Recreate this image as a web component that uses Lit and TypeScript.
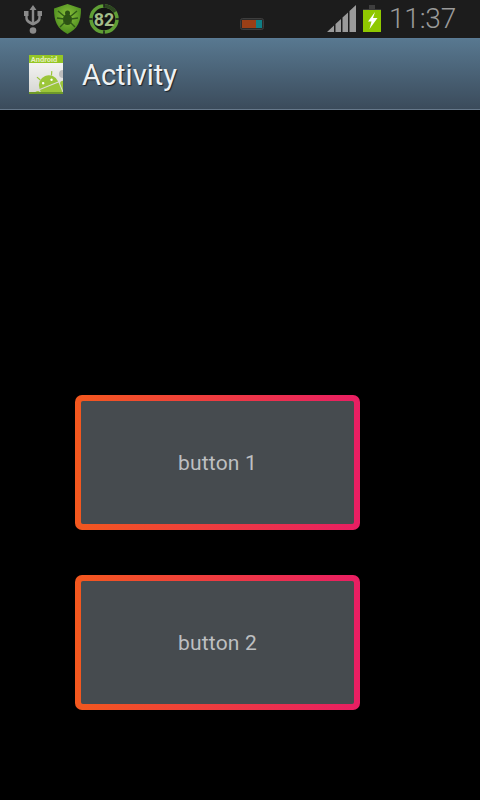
import { LitElement, html, css } from "lit";
import { customElement } from "lit/decorators.js";

@customElement("app-root")
export class AppRoot extends LitElement {
  static styles = css`
    :host { display: block; width: 480px; height: 800px; background: #000; overflow: hidden; font-family: Roboto, "Liberation Sans", sans-serif; }
    .status { height: 38px; background: #1c1c1c; display: flex; align-items: flex-start; box-sizing: border-box; }
    .status svg { display: block; flex: none; }
    .usb { margin: 5px 0 0 24px; }
    .shield { margin: 4px 0 0 12px; }
    .ring { margin: 4px 0 0 8px; }
    .chip { margin: 18px 0 0 121px; }
    .signal { margin: 5px 0 0 63px; }
    .battery { margin: 5px 0 0 7px; }
    .clock { margin: 3px 0 0 8px; font-size: 28px; line-height: 32px; color: #9a9a9a; font-weight: 300; letter-spacing: -0.2px; }
    .bar { height: 72px; box-sizing: border-box; border-top: 1px solid #5a7a94; border-bottom: 1px solid #66788a; background: linear-gradient(#587890, #3b4b5b); display: flex; align-items: center; padding-left: 29px; gap: 19px; }
    .bar svg { display: block; flex: none; }
    .title { font-size: 29px; color: #eef1f3; text-shadow: 1px 1px 1px #1a222a; line-height: 36px; padding-top: 2px; }
    .content { padding: 285px 0 0 75px; display: flex; flex-direction: column; gap: 45px; }
    .btn { width: 285px; height: 135px; box-sizing: border-box; padding: 6px; border-radius: 7px; background: linear-gradient(90deg, #f4581e, #e91e63); }
    .inner { height: 100%; border-radius: 2px; background: #464b4f; color: #bdbfc1; font-size: 21px; letter-spacing: 0.2px; display: flex; align-items: center; justify-content: center; }
  `;

  render() {
    return html`
      <div class="status">
        <svg class="usb" width="18" height="29" viewBox="0 0 18 29" fill="#8a8a8a">
          <path d="M9 0l3.500 5H10.200v14H7.800V5H5.500z"/>
          <rect x="0" y="6" width="4.500" height="5"/>
          <rect x="13.500" y="6" width="4.500" height="5"/>
          <path d="M1.300 10h2.400v3c0 2 2.500 3 5.300 4.500v3C5 19 1.300 17 1.300 13zM14.300 10h2.400v3c0 4-3.700 6-7.700 7.500v-3c2.800-1.500 5.300-2.500 5.300-4.500z"/>
          <circle cx="9" cy="25.500" r="3.300"/>
        </svg>
        <svg class="shield" width="27" height="30" viewBox="0 0 27 30">
          <defs>
            <radialGradient id="sh" cx="50%" cy="40%" r="65%">
              <stop offset="0" stop-color="#8cc23c"/>
              <stop offset="1" stop-color="#44861a"/>
            </radialGradient>
          </defs>
          <path d="M13.500 0L27 4.500c0 13-3 20-13.500 25.500C3 24.500 0 17.500 0 4.500z" fill="url(#sh)"/>
          <ellipse cx="13.500" cy="15.500" rx="4.500" ry="5.500" fill="#2c5214"/>
          <circle cx="13.500" cy="9" r="2.500" fill="#2c5214"/>
          <path d="M4 7l6 5M23 7l-6 5M3 14l7 1M24 14l-7 1M6 23l5-5M21 23l-5-5" stroke="#2f5a18" stroke-width="1.400" fill="none"/>
        </svg>
        <svg class="ring" width="30" height="30" viewBox="0 0 30 30">
          <circle cx="15" cy="15" r="13" fill="#131313" stroke="#5f9f35" stroke-width="3.500"/>
          <path d="M15 2A13 13 0 0 1 26 8" fill="none" stroke="#2c4420" stroke-width="3.500"/>
          <path d="M15 0v3.500M15 26.500V30M0 15h3.500M26.500 15H30" stroke="#1c1c1c" stroke-width="1.500"/>
          <text x="15" y="21.500" text-anchor="middle" font-family="Roboto, sans-serif" font-size="18" font-weight="700" fill="#a3bd88">82</text>
        </svg>
        <svg class="chip" width="24" height="12" viewBox="0 0 24 12">
          <rect x="0.500" y="0.500" width="23" height="11" rx="2" fill="#2a2a2a" stroke="#3d3d3d"/>
          <rect x="2" y="2" width="14" height="8" fill="#9a3f17"/>
          <rect x="16" y="2" width="6" height="8" fill="#0f7f86"/>
        </svg>
        <svg class="signal" width="29" height="27" viewBox="0 0 29 27" fill="#9a9a9a">
          <path d="M0 27L7 20.500V27zM8.500 27V19L14 14V27zM15.500 27V12.500L21 7.500V27zM22.500 27V6L29 0V27z"/>
        </svg>
        <svg class="battery" width="18" height="27" viewBox="0 0 18 27">
          <rect x="6" y="0" width="6" height="4" fill="#3f3f3f"/>
          <rect x="0" y="4" width="18" height="23" fill="#8fc800"/>
          <rect x="0" y="4" width="18" height="1" fill="#3a3a3a"/>
          <path d="M12 7L5 16.500h3.500L6.500 24l8-11H10z" fill="#fff"/>
        </svg>
        <div class="clock">11:37</div>
      </div>
      <div class="bar">
        <svg width="34" height="40" viewBox="0 0 34 40">
          <defs>
            <linearGradient id="pg" x1="0" y1="0" x2="0" y2="1">
              <stop offset="0" stop-color="#fafafa"/>
              <stop offset="1" stop-color="#d8d8d4"/>
            </linearGradient>
            <clipPath id="pc"><rect x="0" y="9" width="34" height="29"/></clipPath>
          </defs>
          <rect x="0" y="1" width="34" height="39" fill="#6f9a2a"/>
          <rect x="0" y="1" width="34" height="37" fill="url(#pg)"/>
          <rect x="0" y="1" width="34" height="8" fill="#95c625"/>
          <text x="15" y="8" text-anchor="middle" font-family="Roboto, sans-serif" font-size="7.500" font-weight="700" fill="#e4f0bd">Android</text>
          <g clip-path="url(#pc)">
            <circle cx="34" cy="20" r="4" fill="#bdbdbd"/>
            <g transform="translate(1 6) rotate(-22 20 28)" fill="#9cc63a">
              <path d="M10 25a10 10 0 0 1 20 0z"/>
              <rect x="10" y="26" width="20" height="18"/>
              <rect x="4" y="26" width="5" height="14" rx="2.500"/>
              <rect x="31" y="26" width="5" height="14" rx="2.500"/>
              <path d="M14 17l-2-4M26 17l2-4" stroke="#9cc63a" stroke-width="1.200"/>
              <circle cx="15.500" cy="21" r="1.200" fill="#fff"/>
              <circle cx="24.500" cy="21" r="1.200" fill="#fff"/>
            </g>
          </g>
        </svg>
        <div class="title">Activity</div>
      </div>
      <div class="content">
        <div class="btn"><div class="inner">button 1</div></div>
        <div class="btn"><div class="inner">button 2</div></div>
      </div>
    `;
  }
}
